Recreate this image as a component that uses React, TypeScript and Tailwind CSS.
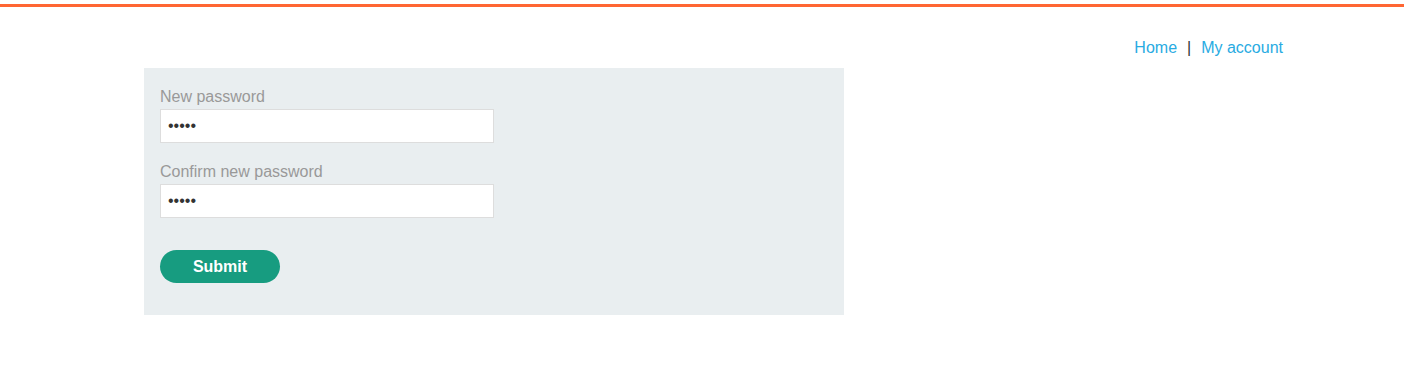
import React from "react";

export default function App() {
  return (
    <div className="min-h-[392px] bg-white" style={{ fontFamily: '"Liberation Sans", Arial, sans-serif' }}>
      <div className="h-[4px] bg-white" />
      <div className="h-[3px] bg-[#ff6633]" />
      <div className="flex justify-end pr-[121px] pt-[30px] h-[61px] text-[16px] leading-[22px]">
        <a className="text-[#29abe2]">Home</a>
        <span className="mx-[10px] text-[#333]">|</span>
        <a className="text-[#29abe2]">My account</a>
      </div>
      <div className="pl-[144px]">
        <div className="w-[700px] bg-[#e9eef0] pt-[18px] pb-[32px] px-[16px]">
          <label className="block text-[16px] leading-[22px] text-[#999]">New password</label>
          <input
            type="password"
            readOnly
            value="12345"
            className="mt-[1px] block w-[334px] h-[34px] bg-white border border-[#ddd] px-[7px] text-[16px] text-[#333] outline-none"
          />
          <label className="block mt-[18px] text-[16px] leading-[22px] text-[#999]">Confirm new password</label>
          <input
            type="password"
            readOnly
            value="12345"
            className="mt-[1px] block w-[334px] h-[34px] bg-white border border-[#ddd] px-[7px] text-[16px] text-[#333] outline-none"
          />
          <button className="mt-[32px] block w-[120px] h-[33px] rounded-full bg-[#179c80] text-white font-bold text-[16px]">
            Submit
          </button>
        </div>
      </div>
    </div>
  );
}
